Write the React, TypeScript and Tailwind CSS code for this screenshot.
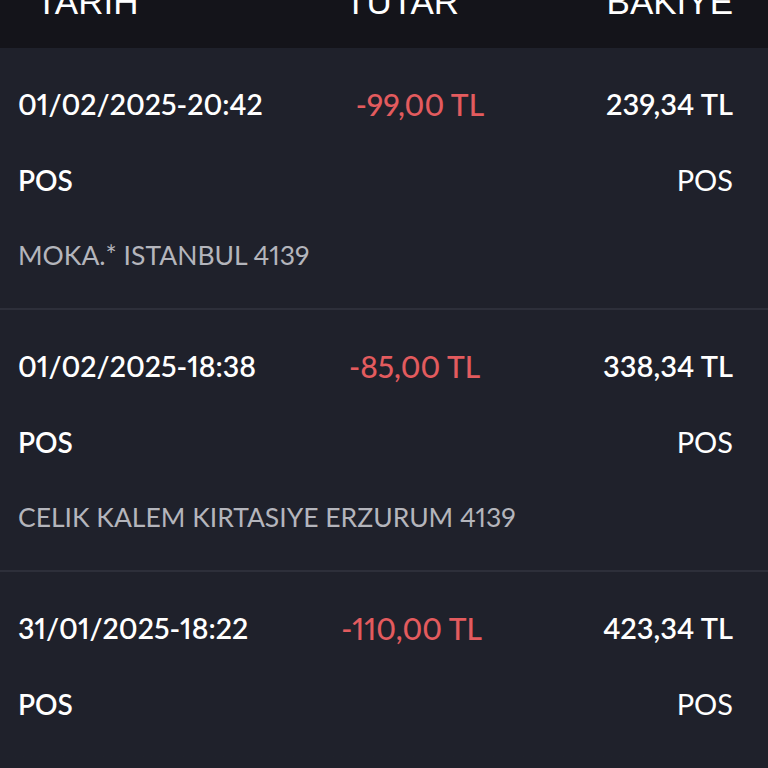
import React from "react";

type Txn = {
  date: string;
  amount: string;
  balance: string;
  kind: string;
  desc: string;
};

const txns: Txn[] = [
  {
    date: "01/02/2025-20:42",
    amount: "-99,00 TL",
    balance: "239,34 TL",
    kind: "POS",
    desc: "MOKA.* ISTANBUL 4139",
  },
  {
    date: "01/02/2025-18:38",
    amount: "-85,00 TL",
    balance: "338,34 TL",
    kind: "POS",
    desc: "CELIK KALEM KIRTASIYE ERZURUM 4139",
  },
  {
    date: "31/01/2025-18:22",
    amount: "-110,00 TL",
    balance: "423,34 TL",
    kind: "POS",
    desc: "A101 YENI MAGAZACILIK ERZURUM 4139",
  },
];

function TxnRow({ txn }: { txn: Txn }) {
  return (
    <div className="pt-[18px] pb-[14px] border-b-2 border-[#2d2f3a] pl-[18px] pr-[35px] font-['Lato',sans-serif] proportional-nums">
      <div className="flex items-center h-[76px] text-[29px] font-semibold">
        <span className="text-white text-[28.5px]">{txn.date}</span>
        <span className="ml-[93px] text-[30px] text-[#e35b5e] font-medium">{txn.amount}</span>
        <span className="ml-auto text-white">{txn.balance}</span>
      </div>
      <div className="flex items-center h-[76px] text-[28px] text-white">
        <span className="font-semibold">{txn.kind}</span>
        <span className="ml-auto font-normal text-[29px]">{txn.kind}</span>
      </div>
      <div className="flex items-center h-[76px] text-[26.5px] text-[#b4b5bc]">
        <span>{txn.desc}</span>
      </div>
    </div>
  );
}

export default function App() {
  return (
    <div className="relative w-[768px] h-[768px] overflow-hidden bg-[#1f212b]">
      <div className="flex items-end h-[48px] pb-[29px] bg-[#14141a] text-white text-[35px] leading-none font-['Liberation_Sans',Arial,sans-serif]">
        <span className="pl-[36px] w-[345px]">TARİH</span>
        <span>TUTAR</span>
        <span className="ml-auto pr-[35px]">BAKİYE</span>
      </div>
      {txns.map((t) => (
        <TxnRow key={t.date} txn={t} />
      ))}
      <div className="absolute left-0 right-0 bottom-0 h-[24px] bg-gradient-to-b from-transparent to-[#1f212b]" />
    </div>
  );
}
